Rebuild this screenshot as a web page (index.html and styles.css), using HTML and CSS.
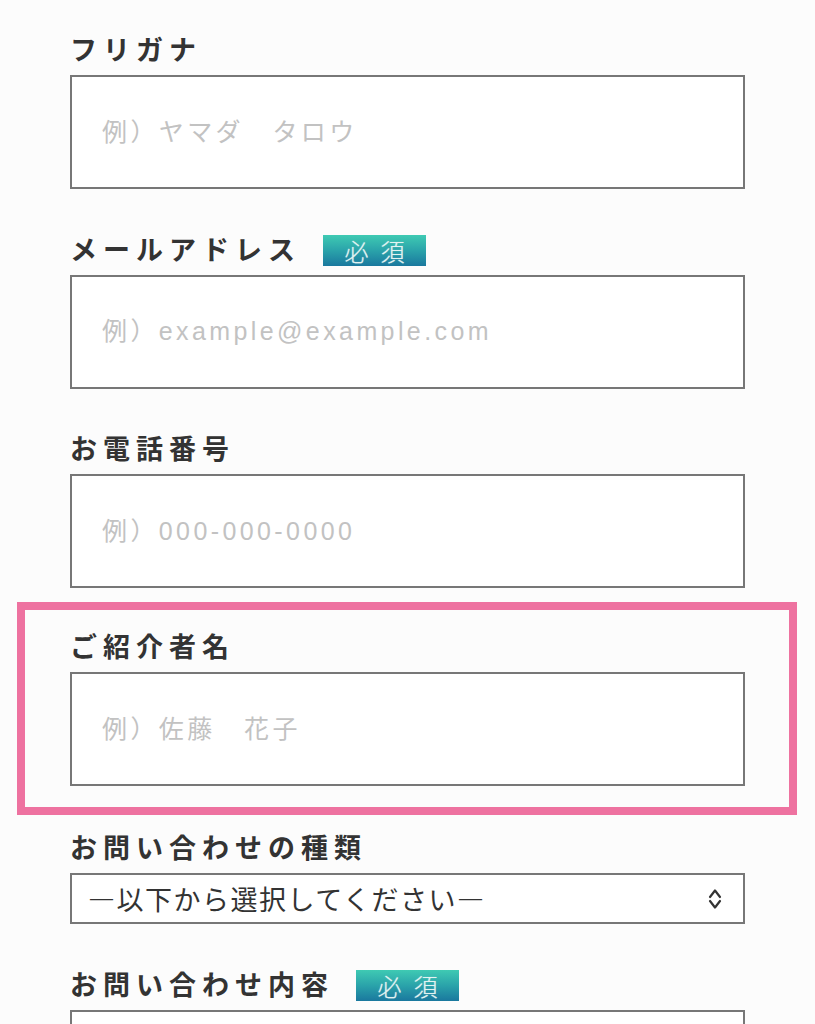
FILE: index.html
```html
<!DOCTYPE html>
<html lang="ja">
<head>
<meta charset="utf-8">
<title>お問い合わせフォーム</title>
<link rel="stylesheet" href="styles.css">
</head>
<body>
<form class="form">
  <div class="field">
    <label class="label">フリガナ</label>
    <input class="input" type="text" placeholder="例）ヤマダ　タロウ">
  </div>
  <div class="field">
    <label class="label">メールアドレス<span class="badge">必須</span></label>
    <input class="input" type="text" placeholder="例）example@example.com">
  </div>
  <div class="field">
    <label class="label">お電話番号</label>
    <input class="input" type="text" placeholder="例）000-000-0000">
  </div>
  <div class="field field--highlight">
    <label class="label">ご紹介者名</label>
    <input class="input" type="text" placeholder="例）佐藤　花子">
  </div>
  <div class="field field--after-highlight">
    <label class="label">お問い合わせの種類</label>
    <div class="select-wrap">
      <select class="select">
        <option>—以下から選択してください—</option>
      </select>
      <svg class="select-arrow" width="16" height="24" viewBox="0 0 16 24" aria-hidden="true">
        <path d="M3 10 L8 3.5 L13 10" fill="none" stroke="#333" stroke-width="2.2" stroke-linecap="round" stroke-linejoin="round"/>
        <path d="M3 14 L8 20.5 L13 14" fill="none" stroke="#333" stroke-width="2.2" stroke-linecap="round" stroke-linejoin="round"/>
      </svg>
    </div>
  </div>
  <div class="field field--message">
    <label class="label">お問い合わせ内容<span class="badge badge--wide">必須</span></label>
    <textarea class="textarea"></textarea>
  </div>
</form>
</body>
</html>
```

FILE: styles.css
```css
html, body {
  margin: 0;
  padding: 0;
  background: #fcfcfc;
}

body {
  font-family: "Noto Sans CJK JP", "Noto Sans", sans-serif;
  color: #333;
  overflow: hidden;
}

.form {
  width: 675px;
  margin-left: 70px;
  padding-top: 29px;
}

.field {
  display: flex;
  flex-direction: column;
}

.field + .field {
  margin-top: 39.5px;
}

.field.field--highlight {
  margin: 14px -52px 0 -53px;
  padding: 16px 44px 21px 45px;
  border: 8px solid #ee72a0;
}

.field.field--after-highlight {
  margin-top: 12px;
}

.field.field--message {
  margin-top: 40px;
}

.label {
  display: block;
  font-size: 27px;
  line-height: 39px;
  font-weight: 700;
  letter-spacing: 6px;
  color: #333;
  margin-bottom: 7px;
  white-space: nowrap;
}

.badge {
  display: inline-block;
  vertical-align: middle;
  margin-left: 22px;
  margin-top: -4px;
  width: 103px;
  height: 31px;
  line-height: 31px;
  text-align: center;
  font-size: 24px;
  font-weight: 300;
  letter-spacing: 12px;
  text-indent: 12px;
  color: #e3f3f1;
  text-shadow: 0 0 1px rgba(255, 255, 255, 0.6);
  background: linear-gradient(to bottom, #3fcab3 0%, #2aa3aa 50%, #1a789e 100%);
}

.badge--wide {
  margin-left: 22px;
}

.input {
  box-sizing: border-box;
  display: block;
  width: 100%;
  height: 114px;
  margin: 0;
  padding: 0 0 0 30px;
  border: 2px solid #777;
  border-radius: 0;
  background: #fff;
  font-family: "Liberation Sans", "Noto Sans CJK JP", sans-serif;
  font-size: 25px;
  letter-spacing: 3.4px;
  color: #333;
  outline: none;
}

.input::placeholder {
  color: #c2c2c2;
  opacity: 1;
}

.select-wrap {
  position: relative;
}

.select {
  box-sizing: border-box;
  display: block;
  width: 100%;
  height: 51px;
  margin: 0;
  padding: 0 0 0 16px;
  border: 2px solid #777;
  border-radius: 0;
  background: #fff;
  -webkit-appearance: none;
  appearance: none;
  font-family: "Noto Sans CJK JP", "Noto Sans", sans-serif;
  font-size: 27px;
  letter-spacing: 1.5px;
  color: #333;
  outline: none;
}

.select-arrow {
  position: absolute;
  right: 22px;
  top: 13.5px;
  pointer-events: none;
}

.textarea {
  box-sizing: border-box;
  display: block;
  width: 100%;
  height: 200px;
  margin: 0;
  border: 2px solid #777;
  border-radius: 0;
  background: #fff;
  resize: none;
  outline: none;
}
```
